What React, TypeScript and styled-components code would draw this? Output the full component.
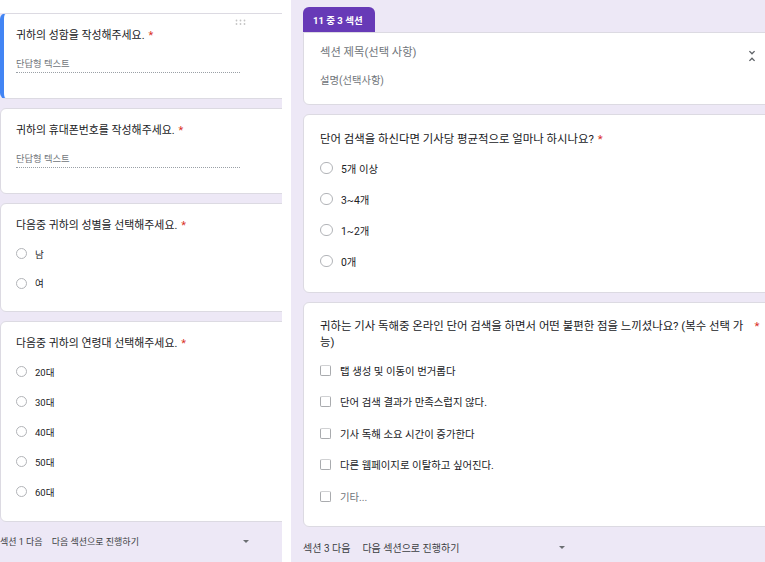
import React from "react";
import styled, { createGlobalStyle, css } from "styled-components";

const BG = "#ede8f6";

const GlobalStyle = createGlobalStyle`
  html, body { margin: 0; padding: 0; background: #ffffff; }
  body { font-family: Roboto, "Noto Sans CJK KR", "Noto Sans", sans-serif; }
  * { box-sizing: border-box; }
`;

const Page = styled.div`
  display: flex;
  width: 765px;
  height: 562px;
  overflow: hidden;
  background: #ffffff;
`;

const LeftPane = styled.div`
  flex: none;
  width: 282px;
  height: 100%;
  overflow: hidden;
  background: ${BG};
  display: flex;
  flex-direction: column;
`;

const TopStrip = styled.div`
  flex: none;
  height: 13px;
  background: #ffffff;
`;

const Divider = styled.div`
  flex: none;
  width: 9px;
  background: #ffffff;
`;

const RightPane = styled.div`
  flex: 1;
  height: 100%;
  overflow: hidden;
  background: ${BG};
  padding: 7px 0 0 12px;
  display: flex;
  flex-direction: column;
`;

const Stack = styled.div<{ $gap: number }>`
  display: flex;
  flex-direction: column;
  gap: ${(p) => p.$gap}px;
`;

const Card = styled.div<{ $w: number; $pad: string; $accent?: boolean; $tabbed?: boolean }>`
  position: relative;
  flex: none;
  width: ${(p) => p.$w}px;
  padding: ${(p) => p.$pad};
  background: #ffffff;
  border: 1px solid #dcdae2;
  border-radius: ${(p) => (p.$tabbed ? "0 6px 6px 6px" : "6px")};
  ${(p) =>
    p.$accent &&
    css`
      border-left: 4px solid #4285f4;
    `}
`;

const DragHandle = styled.svg`
  position: absolute;
  top: 5px;
  left: 230px;
`;

const Question = styled.div<{ $size: number; $lh: number }>`
  display: flex;
  align-items: flex-start;
  font-size: ${(p) => p.$size}px;
  line-height: ${(p) => p.$lh}px;
  color: #202124;
`;

const QText = styled.span`
  flex: 0 1 auto;
`;

const Req = styled.span`
  flex: none;
  margin-left: 4px;
  color: #d93025;
`;

const ShortAnswer = styled.div`
  margin-top: 15px;
  width: 224px;
  font-size: 9.3px;
  line-height: 12px;
  padding-bottom: 2px;
  color: #70757a;
  border-bottom: 1px dotted #9aa0a6;
`;

const OptionList = styled.div<{ $top: number; $gap: number }>`
  display: flex;
  flex-direction: column;
  margin-top: ${(p) => p.$top}px;
  gap: ${(p) => p.$gap}px;
`;

const Option = styled.div<{ $size: number; $gap: number; $muted?: boolean }>`
  display: flex;
  align-items: center;
  height: 20px;
  gap: ${(p) => p.$gap}px;
  font-size: ${(p) => p.$size}px;
  color: ${(p) => (p.$muted ? "#70757a" : "#202124")};
`;

const RadioMark = styled.span<{ $d: number }>`
  flex: none;
  width: ${(p) => p.$d}px;
  height: ${(p) => p.$d}px;
  border-radius: 50%;
  border: 1.5px solid #b2b4b8;
`;

const CheckMark = styled.span`
  flex: none;
  width: 11px;
  height: 11px;
  border-radius: 2px;
  border: 1.5px solid #a9abae;
  border-top-color: #d0d1d3;
`;

const Footer = styled.div<{ $top: number; $size: number }>`
  display: flex;
  align-items: center;
  height: 14px;
  margin-top: ${(p) => p.$top}px;
  font-size: ${(p) => p.$size}px;
  color: #3c4043;
  white-space: nowrap;
`;

const Dropdown = styled.div<{ $w: number; $ml: number }>`
  display: flex;
  align-items: center;
  justify-content: space-between;
  width: ${(p) => p.$w}px;
  margin-left: ${(p) => p.$ml}px;
`;

const Caret = styled.span`
  width: 0;
  height: 0;
  border-left: 3px solid transparent;
  border-right: 3px solid transparent;
  border-top: 3px solid #6b6e72;
`;

const SectionTab = styled.div`
  flex: none;
  align-self: flex-start;
  display: flex;
  align-items: center;
  height: 25px;
  width: 72px;
  padding-left: 10px;
  border-radius: 6px 6px 0 0;
  background: #673ab7;
  color: #ffffff;
  font-size: 9.5px;
  font-weight: 700;
`;

const SectionHead = styled.div`
  display: flex;
  align-items: flex-start;
  justify-content: space-between;
`;

const SectionTitle = styled.div`
  font-size: 11.3px;
  line-height: 14px;
  color: #70757a;
`;

const SectionDesc = styled.div`
  margin-top: 14px;
  font-size: 10.3px;
  line-height: 14px;
  color: #70757a;
`;

const CollapseIcon = styled.svg`
  flex: none;
  margin: 2px 0 -4px;
`;

type Choice = { label: string; muted?: boolean };

function RadioGroup({ items, d, size, gap, top, rowGap }: { items: string[]; d: number; size: number; gap: number; top: number; rowGap: number }) {
  return (
    <OptionList $top={top} $gap={rowGap}>
      {items.map((t) => (
        <Option key={t} $size={size} $gap={gap}>
          <RadioMark $d={d} />
          <span>{t}</span>
        </Option>
      ))}
    </OptionList>
  );
}

function CheckGroup({ items }: { items: Choice[] }) {
  return (
    <OptionList $top={10} $gap={11.5}>
      {items.map((c) => (
        <Option key={c.label} $size={10.4} $gap={9} $muted={c.muted}>
          <CheckMark />
          <span>{c.label}</span>
        </Option>
      ))}
    </OptionList>
  );
}

function Q({ text, size, lh }: { text: string; size: number; lh: number }) {
  return (
    <Question $size={size} $lh={lh}>
      <QText>{text}</QText>
      <Req>*</Req>
    </Question>
  );
}

export default function App() {
  return (
    <>
      <GlobalStyle />
      <Page>
        <LeftPane>
          <TopStrip />
          <Stack $gap={9}>
            <Card $w={300} $pad="15px 16px 25px 12px" $accent>
              <DragHandle width="14" height="7" viewBox="0 0 14 7">
                {[2.5, 6.5, 10.5].map((x) =>
                  [1.5, 5].map((y) => <circle key={`${x}-${y}`} cx={x} cy={y} r="0.9" fill="#c4c4c4" />)
                )}
              </DragHandle>
              <Q text="귀하의 성함을 작성해주세요." size={10.9} lh={14} />
              <ShortAnswer>단답형 텍스트</ShortAnswer>
            </Card>
            <Card $w={300} $pad="15px 16px 25px 15px">
              <Q text="귀하의 휴대폰번호를 작성해주세요." size={10.9} lh={14} />
              <ShortAnswer>단답형 텍스트</ShortAnswer>
            </Card>
            <Card $w={300} $pad="15px 16px 18px 15px">
              <Q text="다음중 귀하의 성별을 선택해주세요." size={10.9} lh={14} />
              <RadioGroup items={["남", "여"]} d={11} size={9.5} gap={8} top={10.5} rowGap={9.5} />
            </Card>
            <Card $w={300} $pad="15px 16px 19px 15px">
              <Q text="다음중 귀하의 연령대 선택해주세요." size={10.9} lh={14} />
              <RadioGroup items={["20대", "30대", "40대", "50대", "60대"]} d={11} size={9.5} gap={8} top={10.5} rowGap={10} />
            </Card>
          </Stack>
          <Footer $top={13} $size={9}>
            <span>섹션 1 다음</span>
            <Dropdown $w={197} $ml={9}>
              <span>다음 섹션으로 진행하기</span>
              <Caret />
            </Dropdown>
          </Footer>
        </LeftPane>
        <Divider />
        <RightPane>
          <SectionTab>11 중 3 섹션</SectionTab>
          <Stack $gap={9}>
            <Card $w={475} $pad="13px 17px 16px 16px" $tabbed>
              <SectionHead>
                <SectionTitle>섹션 제목(선택 사항)</SectionTitle>
                <CollapseIcon width="16" height="16" viewBox="0 0 24 24">
                  <path
                    fill="#5f6368"
                    d="M7.41 18.59L8.83 20 12 16.83 15.17 20l1.41-1.41L12 14l-4.59 4.59zm9.18-13.18L15.17 4 12 7.17 8.83 4 7.41 5.41 12 10l4.59-4.59z"
                  />
                </CollapseIcon>
              </SectionHead>
              <SectionDesc>설명(선택사항)</SectionDesc>
            </Card>
            <Card $w={475} $pad="17px 20px 21px 16px">
              <Q text="단어 검색을 하신다면 기사당 평균적으로 얼마나 하시나요?" size={11.4} lh={14} />
              <RadioGroup items={["5개 이상", "3~4개", "1~2개", "0개"]} d={12.5} size={10.4} gap={8.5} top={12} rowGap={11} />
            </Card>
            <Card $w={475} $pad="15px 17.5px 20px 16px">
              <Q
                text="귀하는 기사 독해중 온라인 단어 검색을 하면서 어떤 불편한 점을 느끼셨나요? (복수 선택 가능)"
                size={11.4}
                lh={16}
              />
              <CheckGroup
                items={[
                  { label: "탭 생성 및 이동이 번거롭다" },
                  { label: "단어 검색 결과가 만족스럽지 않다." },
                  { label: "기사 독해 소요 시간이 증가한다" },
                  { label: "다른 웹페이지로 이탈하고 싶어진다." },
                  { label: "기타...", muted: true },
                ]}
              />
            </Card>
          </Stack>
          <Footer $top={13} $size={10}>
            <span>섹션 3 다음</span>
            <Dropdown $w={203} $ml={12}>
              <span>다음 섹션으로 진행하기</span>
              <Caret />
            </Dropdown>
          </Footer>
        </RightPane>
      </Page>
    </>
  );
}
